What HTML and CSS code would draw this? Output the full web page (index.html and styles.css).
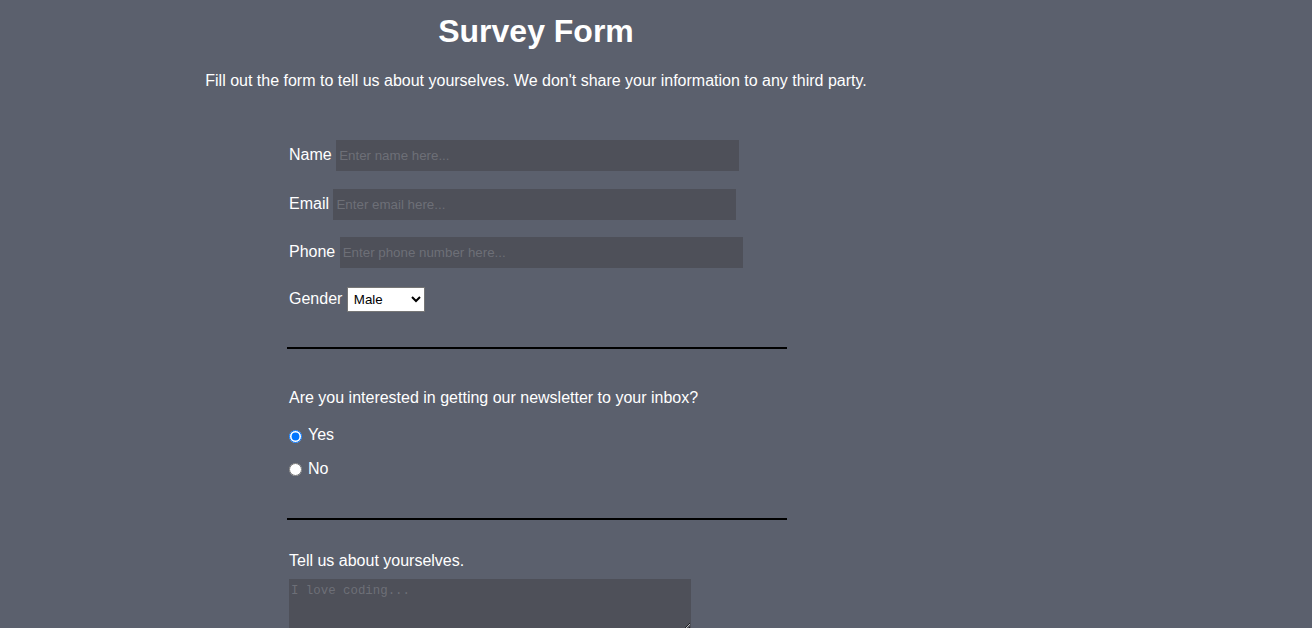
FILE: index.html
```html
<!DOCTYPE html>
<html lang="en">
<head>
<meta charset="utf-8">
<title>Survey Form</title>
<link rel="stylesheet" href="styles.css">
</head>
<body>
<header class="header">
  <h1 class="title">Survey Form</h1>
  <p class="intro">Fill out the form to tell us about yourselves. We don't share your information to any third party.</p>
</header>
<form class="survey">
  <div class="row row-name"><label for="name">Name</label> <input class="field" id="name" type="text" placeholder="Enter name here..."></div>
  <div class="row row-email"><label for="email">Email</label> <input class="field" id="email" type="email" placeholder="Enter email here..."></div>
  <div class="row row-phone"><label for="phone">Phone</label> <input class="field" id="phone" type="tel" placeholder="Enter phone number here..."></div>
  <div class="row row-gender"><label for="gender">Gender</label> <select class="select" id="gender"><option>Male</option><option>Female</option><option>Other</option></select></div>
  <hr class="rule rule-first">
  <p class="question">Are you interested in getting our newsletter to your inbox?</p>
  <div class="choice choice-yes"><input class="radio" type="radio" name="news" id="yes" checked> <label for="yes">Yes</label></div>
  <div class="choice choice-no"><input class="radio" type="radio" name="news" id="no"> <label for="no">No</label></div>
  <hr class="rule rule-second">
  <p class="question question-about">Tell us about yourselves.</p>
  <textarea class="about" placeholder="I love coding..."></textarea>
</form>
</body>
</html>
```
FILE: styles.css
```css
html, body {
  margin: 0;
  padding: 0;
}
html {
  overflow: hidden;
}
body {
  background: #5b606d;
  color: #ffffff;
  font-family: "Liberation Sans", Arial, sans-serif;
  font-size: 16px;
  height: 628px;
}
.header {
  width: 1072px;
  text-align: center;
}
.title {
  margin: 13px 0 0;
  font-size: 32px;
  font-weight: bold;
  line-height: normal;
}
.intro {
  margin: 22px 0 0;
  line-height: normal;
}
.survey {
  margin: 50px 0 0 289px;
  width: 500px;
}
.row {
  line-height: normal;
}
.row-email { margin-top: 18px; }
.row-phone { margin-top: 17px; }
.row-gender { margin-top: 19px; }
.field {
  box-sizing: border-box;
  width: 403px;
  height: 31px;
  padding: 0 3px;
  border: none;
  outline: none;
  background: #4e5059;
  color: #ffffff;
  font-family: "Liberation Sans", Arial, sans-serif;
  font-size: 13.333px;
}
.field::placeholder {
  color: #6d6f77;
}
.select {
  box-sizing: border-box;
  width: 78px;
  height: 25px;
  border: 1px solid #767676;
  border-radius: 0;
  background: #ffffff;
  color: #000000;
  font-family: "Liberation Sans", Arial, sans-serif;
  font-size: 13.333px;
  padding: 0 2px;
}
.rule {
  width: 500px;
  height: 0;
  border: none;
  border-top: 2px solid #000000;
  margin: 0 0 0 -2px;
}
.rule-first { margin-top: 35px; }
.question {
  margin: 40px 0 0;
  line-height: normal;
}
.choice {
  display: flex;
  align-items: center;
  line-height: normal;
}
.choice-yes { margin-top: 19px; }
.choice-no { margin-top: 15.6px; }
.radio {
  width: 13px;
  height: 13px;
  margin: 2px 2px 0 0;
}
.choice label {
  margin-left: 4px;
}
.rule-second { margin-top: 40px; }
.question-about {
  margin-top: 32px;
}
.about {
  display: block;
  box-sizing: border-box;
  width: 402px;
  height: 52px;
  margin: 9px 0 0;
  padding: 5px 2px;
  border: none;
  outline: none;
  background: #4e5059;
  color: #ffffff;
  font-family: "Liberation Mono", "DejaVu Sans Mono", monospace;
  font-size: 12.4px;
}
.about::placeholder {
  color: #6d6f77;
}
```
